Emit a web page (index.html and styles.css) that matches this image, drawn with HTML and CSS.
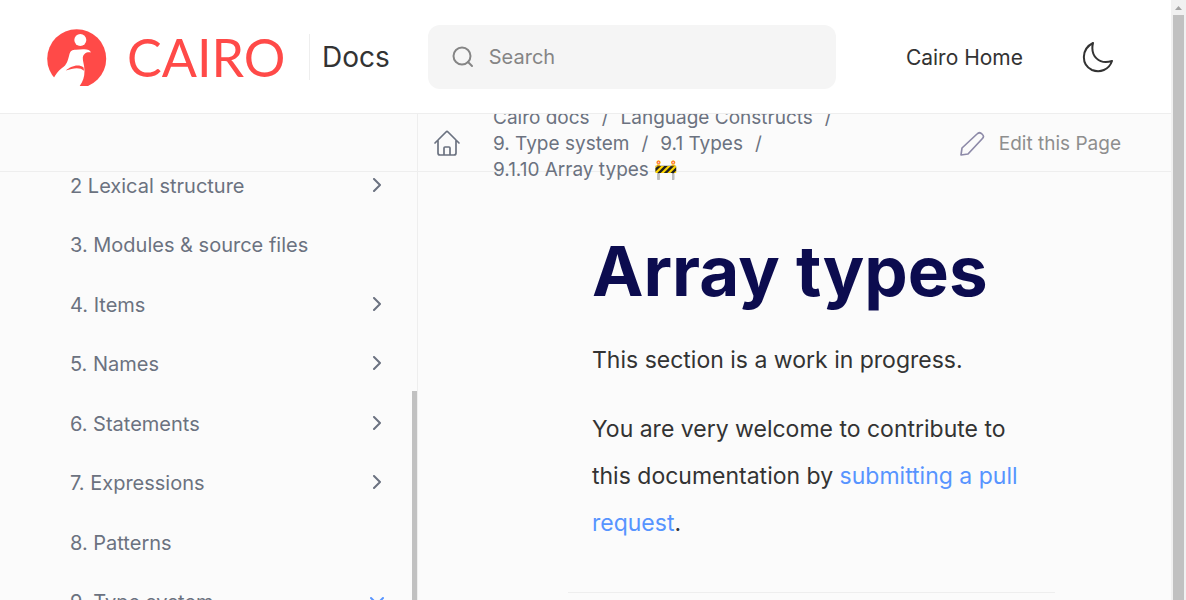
FILE: index.html
```html
<!DOCTYPE html>
<html lang="en">
<head>
<meta charset="utf-8">
<meta name="viewport" content="width=device-width, initial-scale=1">
<title>Array types | Cairo Docs</title>
<link rel="stylesheet" href="styles.css">
</head>
<body>
<div class="window">
  <div class="page">
    <header class="header">
      <a class="brand" href="#" aria-label="Cairo Docs">
        <svg class="brand-mark" width="60" height="57" viewBox="0 0 60 57" aria-hidden="true">
          <circle cx="29.7" cy="29.7" r="29.5" fill="#ff4a48"/>
          <path fill="#fff" d="M6.3 49.8C9 45 11 42 15 39C20 36 21 31 22.5 25C23.5 22 25 20.7 29 20.7L36 20.3C40 20 43 21 44 23.5C39 22.8 36.5 25 35.8 28.5C35.5 32 37.5 36 37.5 42C37.5 48 36 52 32.7 57H0V56Z"/>
          <path fill="#ff4a48" d="M18.8 41.5C23 38 31 34 36.6 38.6L37 41.8C33 37.8 26 39 18.8 41.5Z"/>
          <circle cx="33.3" cy="11" r="6" fill="#fff"/>
        </svg>
        <span class="brand-name">CAIRO</span>
        <span class="brand-docs">Docs</span>
      </a>
      <label class="search">
        <svg width="22" height="22" viewBox="0 0 22 22" fill="none" stroke="#858585" stroke-width="2" stroke-linecap="round" aria-hidden="true"><circle cx="10" cy="10" r="8.5"/><path d="M16 16l4 4"/></svg>
        <input class="search-input" type="search" placeholder="Search" aria-label="Search">
      </label>
      <a class="home-link" href="#">Cairo Home</a>
      <button class="theme" type="button" aria-label="Dark mode">
        <svg width="32" height="32" viewBox="0 0 32 32" fill="none" stroke="#333" stroke-width="2" stroke-linejoin="round" aria-hidden="true"><path d="M11 2C-1 8-1 24 10 29C18 32 27 29 30 20C17 24 8 15 11 2Z"/></svg>
      </button>
    </header>
    <div class="toolbar">
      <div class="toolbar-side"></div>
      <a class="toolbar-home" href="#" aria-label="Home">
        <svg width="28" height="28" viewBox="0 0 28 28" fill="none" stroke="#6b7280" stroke-width="1.7" stroke-linecap="round" stroke-linejoin="round" aria-hidden="true"><path d="M2 14L13 3Q14 2 15 3L26 14M5 11V24Q5 26 7 26H21Q23 26 23 24V11M11 26V19Q11 18 12 18H16Q17 18 17 19V26"/></svg>
      </a>
      <nav class="crumbs" aria-label="Breadcrumbs">
        <a href="#">Cairo docs</a><span class="slash">/</span><a href="#">Language Constructs</a><span class="slash">/</span>
        <a href="#">9. Type system</a><span class="slash">/</span><a href="#">9.1 Types</a><span class="slash">/</span>
        <a href="#">9.1.10 Array types 🚧</a>
      </nav>
      <a class="edit" href="#">
        <svg width="26" height="26" viewBox="0 0 26 26" fill="none" stroke="#8d8aa8" stroke-width="1.7" stroke-linejoin="round" aria-hidden="true"><path d="M2 24L3 17L18 3C20 1 22 2 23 3C25 5 25 6 23 8L9 23Z"/></svg>
        Edit this Page
      </a>
    </div>
    <div class="body">
      <aside class="sidebar">
        <ul class="nav">
          <li><a href="#">2 Lexical structure</a><svg class="chev" viewBox="0 0 14 14" aria-hidden="true"><path d="M4 1l6 6-6 6"/></svg></li>
          <li><a href="#">3. Modules &amp; source files</a></li>
          <li><a href="#">4. Items</a><svg class="chev" viewBox="0 0 14 14" aria-hidden="true"><path d="M4 1l6 6-6 6"/></svg></li>
          <li><a href="#">5. Names</a><svg class="chev" viewBox="0 0 14 14" aria-hidden="true"><path d="M4 1l6 6-6 6"/></svg></li>
          <li><a href="#">6. Statements</a><svg class="chev" viewBox="0 0 14 14" aria-hidden="true"><path d="M4 1l6 6-6 6"/></svg></li>
          <li><a href="#">7. Expressions</a><svg class="chev" viewBox="0 0 14 14" aria-hidden="true"><path d="M4 1l6 6-6 6"/></svg></li>
          <li><a href="#">8. Patterns</a></li>
          <li><a href="#">9. Type system</a><svg class="chev chev-open" viewBox="0 0 14 14" aria-hidden="true"><path d="M1 4l6 6 6-6"/></svg></li>
        </ul>
        <div class="sidebar-thumb"></div>
      </aside>
      <main class="content">
        <article class="doc">
          <h1>Array types</h1>
          <p>This section is a work in progress.</p>
          <p>You are very welcome to contribute to this documentation by <a href="#">submitting a pull request</a>.</p>
        </article>
        <hr class="rule">
      </main>
    </div>
  </div>
  <div class="scrollbar" aria-hidden="true">
    <svg class="scroll-arrow" width="7" height="4" viewBox="0 0 7 4"><path fill="#a3a3a3" d="M3.5 0L7 4H0Z"/></svg>
    <div class="scroll-thumb"></div>
  </div>
</div>
</body>
</html>
```
FILE: styles.css
```css
* { box-sizing: border-box; }
body {
  margin: 0;
  background: #fbfbfb;
  color: #333;
  font-family: Inter, "Liberation Sans", sans-serif;
  font-size: 20px;
}
a { color: inherit; text-decoration: none; }
.window { display: flex; height: 100vh; overflow: hidden; }
.page { flex: 1; min-width: 0; display: flex; flex-direction: column; }

.header {
  display: flex;
  align-items: center;
  flex: none;
  padding: 25px 57px 24px 47px;
  background: #fff;
  border-bottom: 1px solid #eee;
  position: relative;
  z-index: 2;
}
.brand { display: flex; align-items: center; }
.brand-mark { flex: none; }
.brand-name {
  margin-left: 20px;
  width: 182px;
  color: #ff4a48;
  font: 52px/46px Lato, sans-serif;
}
.brand-docs {
  padding-left: 12px;
  border-left: 1px solid #eee;
  font-size: 28px;
  line-height: 46px;
}
.search {
  display: flex;
  align-items: center;
  flex: 0 1 408px;
  gap: 15px;
  margin-left: 38px;
  padding: 20px 24px;
  border-radius: 12px;
  background: #f5f5f5;
}
.search svg { flex: none; }
.search-input {
  flex: 1;
  min-width: 0;
  height: 24px;
  padding: 0;
  border: 0;
  outline: 0;
  background: none;
  font: inherit;
}
.search-input::placeholder { color: #858585; opacity: 1; }
.home-link { margin-left: auto; font-size: 21px; white-space: nowrap; }
.theme { display: flex; margin-left: 59px; padding: 0; border: 0; background: none; }

.toolbar {
  display: flex;
  align-items: center;
  flex: none;
  height: 58px;
  border-bottom: 1px solid #eee;
  color: #6b7280;
  font-size: 19px;
  line-height: 26px;
  position: relative;
  z-index: 1;
}
.toolbar-side { flex: none; width: 418px; align-self: stretch; border-right: 1px solid #eee; }
.toolbar-home { display: flex; margin-left: 15px; }
.crumbs { flex: 0 1 360px; margin-left: 32px; padding-top: 2px; }
.crumbs a { white-space: nowrap; }
.slash { margin: 0 12px; }
.edit {
  display: flex;
  align-items: center;
  gap: 14px;
  margin-left: auto;
  padding: 2px 50px 0 0;
  color: #8e8e8e;
  white-space: nowrap;
}

.body { display: flex; flex: 1; min-height: 0; }
.sidebar {
  flex: none;
  width: 418px;
  border-right: 1px solid #eee;
  overflow: hidden;
  position: relative;
}
.nav {
  display: grid;
  grid-auto-rows: 1fr;
  min-height: 476px;
  margin: -16px 0 0;
  padding: 0 33px 0 70px;
  list-style: none;
  color: #6b7280;
}
.nav li { display: flex; align-items: center; justify-content: space-between; }
.chev { width: 14px; height: 14px; margin-bottom: 2px; fill: none; stroke: #6b7280; stroke-width: 2; stroke-linecap: round; stroke-linejoin: round; }
.chev-open { stroke: #5794ff; }
.sidebar-thumb { position: absolute; top: 219px; right: 0; bottom: 0; width: 5px; background: #c1c1c1; }

.content { flex: 1; min-width: 0; padding: 57px 116px 0 150px; overflow: hidden; }
.doc { padding: 0 24px; font-size: 23px; line-height: 47px; }
.doc h1 { margin: 0; padding-bottom: 2px; color: #0c0c4f; font-size: 69px; line-height: 84px; font-weight: 700; }
.doc p { margin: 22px 0 0; }
.doc p a { color: #5794ff; }
.rule { margin: 45px 0 0; border: 0; border-top: 1px solid #eee; }

.scrollbar { flex: none; width: 15px; padding: 6px 2px 0; background: #f1f1f1; display: flex; flex-direction: column; align-items: center; }
.scroll-arrow { flex: none; }
.scroll-thumb { flex: 1; width: 11px; margin-top: 5px; background: #c1c1c1; }
```
